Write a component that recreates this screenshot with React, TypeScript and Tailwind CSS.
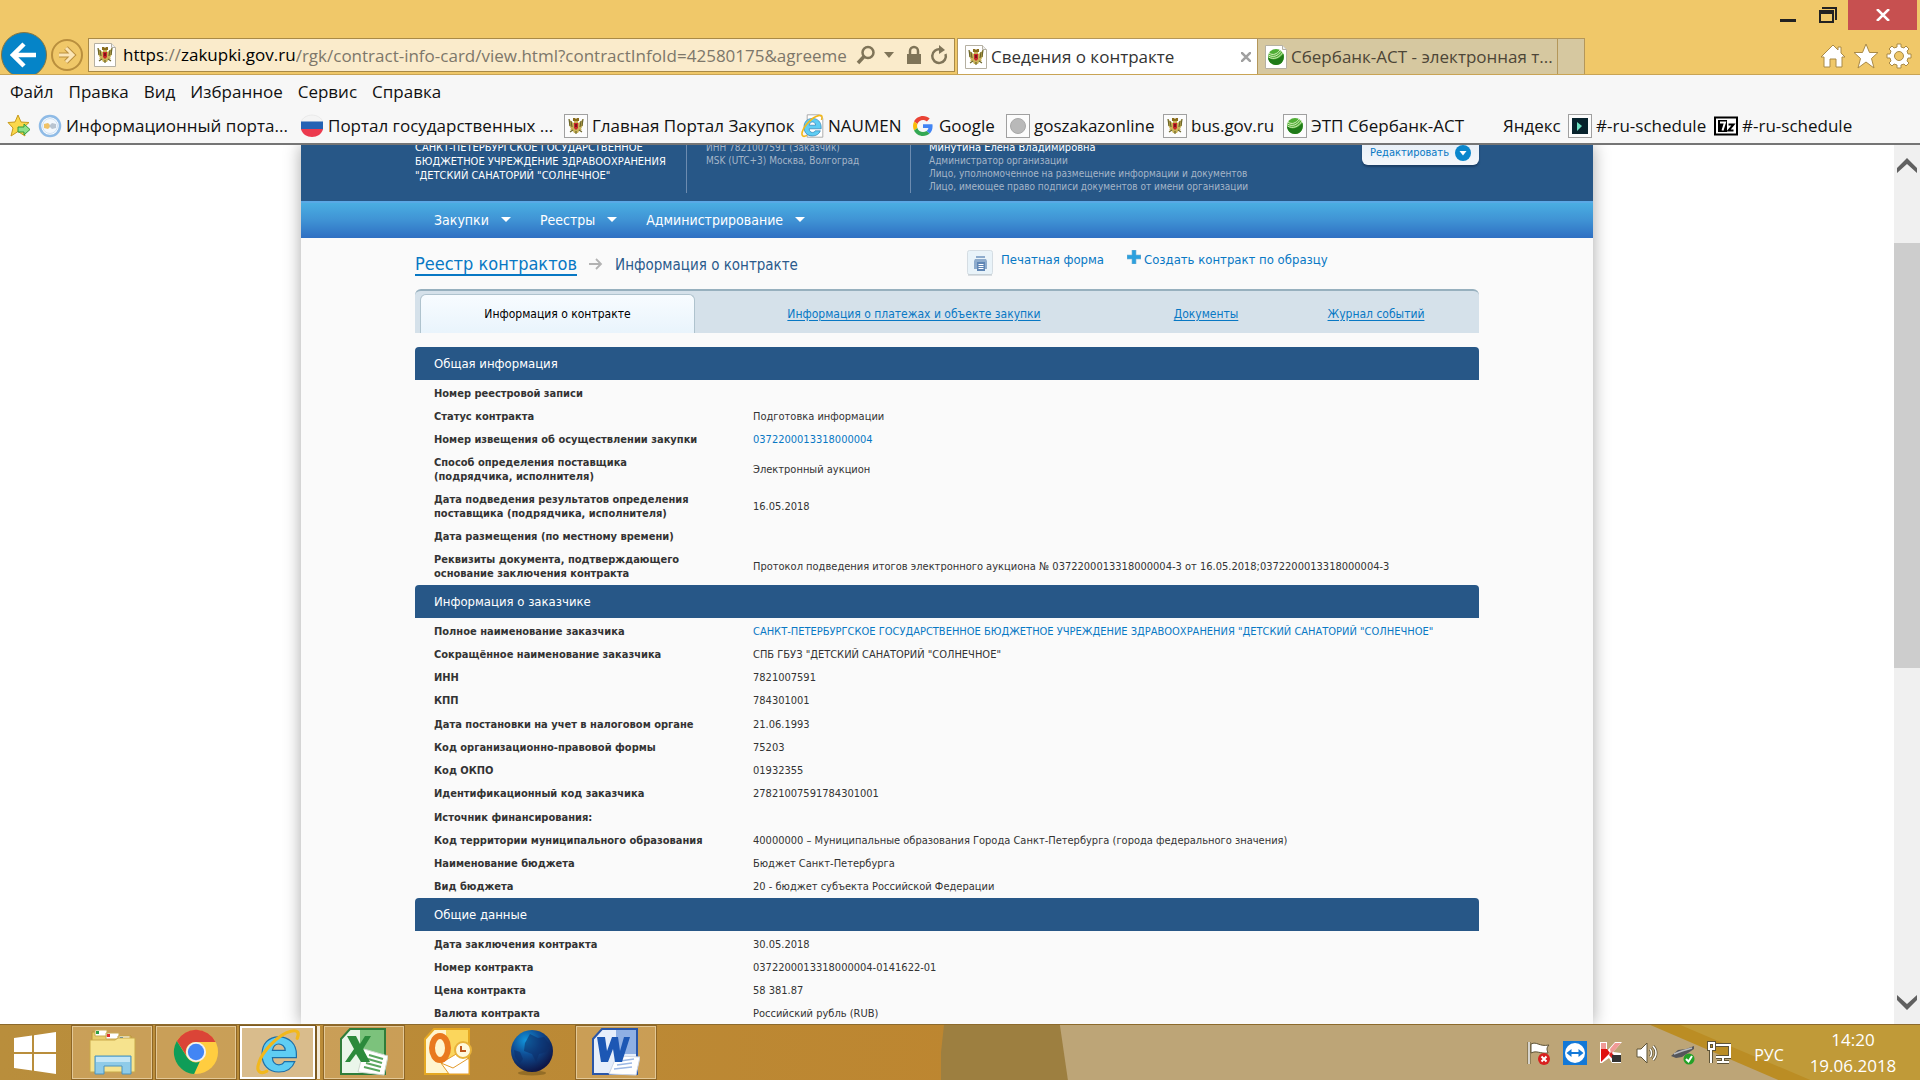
import React from 'react';

const SITE_FONT = "font-['DejaVu_Sans_Condensed','DejaVu_Sans',sans-serif]";

/* ---------- Icons ---------- */

const Eagle = () => (
    <g>
        <path d="M5 5l3 3 2 1v-3h4v3l2-1 3-3v6l-2 4 1 1-3 1-1 2h-4l-1-2-3-1 1-1-2-4z" fill="#c9b257" />
        <path d="M5 5l1 7M19 5l-1 7M7 7l1 6M17 7l-1 6M9 16l-3 2M15 16l3 2M12 17v3" stroke="#6b652a" strokeWidth="1.2" fill="none" />
        <path d="M9 4h2l1 1 1-1h2v3H9z" fill="#8a6d1c" />
        <path d="M10 9h4v5l-2 2-2-2z" fill="#c9252b" />
        <path d="M11 10h2v3h-2z" fill="#7c1519" />
    </g>
);

const Ball = () => (
    <g>
        <circle cx="12" cy="12" r="8" fill="#4fae35" />
        <path d="M4 12c4 4 11 3 15.500-3 1 5-1 11-7.500 11-4 0-8-3-8-8z" fill="#1f7a18" />
        <path d="M5 8c4 3 8 1 11-3M4.500 10c5 3 9 1 13-4M4.500 12c5 3 11 1 14.500-5" stroke="#e4f5cc" strokeWidth=".9" fill="none" />
    </g>
);

const PageIcon: React.FC<{ children: React.ReactNode }> = ({ children }) => (
    <svg viewBox="0 0 24 24" className="w-6 h-6 shrink-0">
        <path d="M1.5 .5h17l4 4v19h-21z" fill="#fff" stroke="#b5b0a2" />
        <path d="M18.500 .5v4h4" fill="#eee" stroke="#b5b0a2" />
        {children}
    </svg>
);

const BoxIcon: React.FC<{ children: React.ReactNode }> = ({ children }) => (
    <svg viewBox="0 0 24 24" className="w-6 h-6 shrink-0">
        <rect x=".5" y=".5" width="23" height="23" fill="#fcfcfc" stroke="#a0a0a0" />
        {children}
    </svg>
);

const AddFavoriteIcon = () => (
    <svg viewBox="0 0 24 24" className="w-6 h-6">
        <path d="M11 1l3 7 8 .500-6 5.500 2 8-7-4.500L4 22l2-8-5-5.500L8 8z" fill="#fbd84b" stroke="#c79a1e" />
        <path d="M11 13h6v-3l6 5.500-6 5.500v-3h-6z" fill="#8fe08a" stroke="#2f9a3a" />
    </svg>
);

const HandshakeIcon = () => (
    <svg viewBox="0 0 24 24" className="w-6 h-6 shrink-0">
        <circle cx="12" cy="12" r="10" fill="#fff" stroke="#8fbbe6" strokeWidth="2.500" />
        <circle cx="12" cy="12" r="7.500" fill="#f3f8fd" stroke="#cfe1f3" />
        <path d="M6 10l4-1 3 3-3 3-4-1z" fill="#f0c267" />
        <path d="M18 10l-4-1-3 3 3 3 4-1z" fill="#b9c4d0" />
    </svg>
);

const FlagShieldIcon = () => (
    <svg viewBox="0 0 24 24" className="w-6 h-6 shrink-0">
        <path d="M1.500 8c0-4 6-7 10.500-7s10.500 3 10.500 7z" fill="#f4f4f4" stroke="#ddd" strokeWidth=".5" />
        <path d="M1 7.500h22v8H1z" fill="#2462b4" />
        <path d="M1 15h22c-1 5-6 8-11 8S2 20 1 15z" fill="#ec3a4e" />
    </svg>
);

const IeGlyph = () => (
    <>
        <path d="M53 33c0-13-9-22-22-22S10 20 10 33s8 22 21 22c10 0 17-5 20-13H38c-1 2-3 4-7 4-5 0-8-4-8-9h30zM23 28c1-5 4-8 8-8s8 3 8 8z" fill="#5fcdf3" stroke="#1d6fa8" strokeWidth="1.500" />
        <path d="M16 54c-7 4-14 1-10-10C10 30 30 8 46 4c9-2 11 2 8 9" fill="none" stroke="#f2b81c" strokeWidth="4" strokeLinecap="round" />
    </>
);

const GoogleIcon = () => (
    <svg viewBox="0 0 48 48" className="w-5 h-5 mx-0.5 shrink-0">
        <path fill="#EA4335" d="M24 9.500c3.540 0 6.710 1.220 9.210 3.600l6.850-6.850C35.900 2.380 30.470 0 24 0 14.620 0 6.510 5.380 2.560 13.220l7.980 6.190C12.430 13.720 17.740 9.500 24 9.500z" />
        <path fill="#4285F4" d="M46.980 24.550c0-1.570-.150-3.090-.380-4.550H24v9.020h12.940c-.580 2.960-2.260 5.480-4.780 7.180l7.730 6c4.510-4.180 7.090-10.360 7.090-17.650z" />
        <path fill="#FBBC05" d="M10.530 28.590c-.480-1.450-.760-2.990-.760-4.590s.270-3.140.760-4.590l-7.980-6.190C.920 16.460 0 20.120 0 24s.920 7.540 2.560 10.780l7.970-6.190z" />
        <path fill="#34A853" d="M24 48c6.480 0 11.930-2.130 15.890-5.810l-7.730-6c-2.150 1.450-4.920 2.300-8.160 2.300-6.260 0-11.570-4.220-13.470-9.910l-7.980 6.190C6.510 42.620 14.620 48 24 48z" />
    </svg>
);

/* ---------- Browser window ---------- */

const WindowButtons = () => (
    <div className="flex items-start pr-[3px]">
        <button type="button" aria-label="Свернуть" className="w-10 h-[30px] flex items-center justify-center">
            <svg viewBox="0 0 16 16" className="w-4 h-4"><path d="M0 12h16v3H0z" fill="#222" /></svg>
        </button>
        <button type="button" aria-label="Восстановить" className="w-10 h-[30px] flex items-center justify-center">
            <svg viewBox="0 0 18 16" className="w-[18px] h-4">
                <path d="M3 0h15v13h-2V2H3z" fill="#222" />
                <path d="M0 3h15v13H0zM2 7v7h11V7z" fill="#222" fillRule="evenodd" />
            </svg>
        </button>
        <button type="button" aria-label="Закрыть" className="w-[69px] h-[30px] bg-[#c75050] flex items-center justify-center">
            <svg viewBox="0 0 14 12" className="w-3.5 h-3"><path d="M1 0l12 12M13 0L1 12" stroke="#fff" strokeWidth="2.500" /></svg>
        </button>
    </div>
);

const TitleBar = () => (
    <header className="bg-[#f0c869] border-b border-[#c9a455] h-[75px] flex flex-col overflow-hidden">
        <div className="h-[38px] shrink-0 flex justify-end">
            <WindowButtons />
        </div>
        <div className="h-9 shrink-0 flex items-start">
            <div className="flex w-[88px] shrink-0 pl-px">
                <button type="button" aria-label="Назад" className="-mt-1.5 w-[46px] h-[46px] rounded-full bg-[#0584c8] border border-[#86753f] flex items-center justify-center">
                    <svg viewBox="0 0 28 26" className="w-7 h-[26px]"><path d="M26 13H4M14 2L3 13l11 11" stroke="#fff" strokeWidth="4.500" fill="none" /></svg>
                </button>
                <button type="button" aria-label="Вперёд" className="ml-1 mt-px w-8 h-8 rounded-full border-2 border-[#b98f3e] flex items-center justify-center">
                    <svg viewBox="0 0 20 20" className="w-5 h-5"><path d="M2 10h14M9 3l7 7-7 7" stroke="#b98f3e" strokeWidth="5" fill="none" /><path d="M2 10h14M9 3l7 7-7 7" stroke="#fbe5b5" strokeWidth="3" fill="none" /></svg>
                </button>
            </div>
            <div className="flex items-center w-[867px] h-[34px] bg-[#faebcb] border border-[#a98a47] pl-1 pr-1.5 text-[17px] text-[#7d776a]">
                <PageIcon><Eagle /></PageIcon>
                <label htmlFor="address" className="ml-1.5 whitespace-nowrap">
                    <span className="text-black">https</span>://<span className="text-black">zakupki.gov.ru</span>
                </label>
                <input
                    id="address"
                    readOnly
                    value="/rgk/contract-info-card/view.html?contractInfoId=42580175&agreeme"
                    className="flex-1 min-w-0 h-full bg-transparent outline-none"
                />
                <div className="flex items-center ml-1.5 text-[#7f7458]">
                    <button type="button" aria-label="Поиск"><svg viewBox="0 0 20 20" className="w-5 h-5"><circle cx="12" cy="7.500" r="5.500" fill="none" stroke="currentColor" strokeWidth="2.500" /><path d="M8 11.500L2 18" stroke="currentColor" strokeWidth="3.500" /></svg></button>
                    <button type="button" aria-label="Список адресов" className="ml-2"><svg viewBox="0 0 10 6" className="w-2.5 h-1.5"><path d="M0 0h10L5 6z" fill="currentColor" /></svg></button>
                    <button type="button" aria-label="Безопасность" className="ml-3"><svg viewBox="0 0 16 20" className="w-4 h-5"><path d="M1 9h14v10H1z" fill="currentColor" /><path d="M4 9V6a4 4 0 0 1 8 0v3" fill="none" stroke="currentColor" strokeWidth="2.500" /></svg></button>
                    <button type="button" aria-label="Обновить" className="ml-2"><svg viewBox="0 0 18 20" className="w-[18px] h-5"><path d="M15.500 9a6.800 6.800 0 1 1-5-4.500" fill="none" stroke="currentColor" strokeWidth="2.500" /><path d="M9 0l6 5-6 4z" fill="currentColor" /></svg></button>
                </div>
            </div>
            <div role="tablist" className="flex h-full ml-0.5 border-t border-[#b4975a]">
                <div role="tab" aria-selected="true" className="w-[300px] bg-white border-l border-[#b4975a] flex items-center pl-1.5 pr-1.5 text-[17px] text-[#333]">
                    <PageIcon><Eagle /></PageIcon>
                    <span className="ml-[3px] flex-1 whitespace-nowrap">Сведения о контракте</span>
                    <button type="button" aria-label="Закрыть вкладку"><svg viewBox="0 0 10 10" className="w-2.5 h-2.5"><path d="M0 0l10 10M10 0L0 10" stroke="#a0a0a0" strokeWidth="2.500" /></svg></button>
                </div>
                <div role="tab" aria-selected="false" className="w-[301px] bg-[#d6c8a0] border-x border-[#b4975a] flex items-center pl-1.5 text-[17px] text-[#4d4637]">
                    <PageIcon><Ball /></PageIcon>
                    <span className="ml-[3px] whitespace-nowrap">Сбербанк-АСТ - электронная т...</span>
                </div>
                <button type="button" aria-label="Новая вкладка" className="w-[27px] bg-[#d6c8a0] border-r border-[#b4975a]" />
            </div>
            <div className="flex ml-auto pr-2 pt-[5px] gap-[7px] text-white">
                <button type="button" aria-label="Домой"><svg viewBox="0 0 26 26" className="w-[26px] h-[26px]"><path d="M13 2L1 14h3v10h6v-8h6v8h6V14h3l-4-4V4h-3v3z" fill="currentColor" stroke="#a98a47" /></svg></button>
                <button type="button" aria-label="Избранное"><svg viewBox="0 0 26 26" className="w-[26px] h-[26px]"><path d="M13 1l3.500 8.500H25l-6.500 6L21 25l-8-6-8 6 2.500-9.500-6.500-6h8.500z" fill="currentColor" stroke="#a98a47" /></svg></button>
                <button type="button" aria-label="Сервис"><svg viewBox="0 0 26 26" className="w-[26px] h-[26px]"><path d="M11 1h4v3l3 1 2-2 3 3-2 2 1 3h3v4h-3l-1 3 2 2-3 3-2-2-3 1v3h-4v-3l-3-1-2 2-3-3 2-2-1-3H1v-4h3l1-3-2-2 3-3 2 2 3-1zM13 8.500a4.500 4.500 0 1 0 0 9 4.500 4.500 0 0 0 0-9z" fill="currentColor" fillRule="evenodd" stroke="#a98a47" /></svg></button>
            </div>
        </div>
    </header>
);

const menuItems = ['Файл', 'Правка', 'Вид', 'Избранное', 'Сервис', 'Справка'];

const favorites = [
    { text: 'Информационный порта...', width: 'w-[262px]', icon: <HandshakeIcon /> },
    { text: 'Портал государственных ...', width: 'w-[264px]', icon: <FlagShieldIcon /> },
    { text: 'Главная Портал Закупок', width: 'w-[236px]', icon: <BoxIcon><Eagle /></BoxIcon> },
    {
        text: 'NAUMEN',
        width: 'w-[111px]',
        icon: (
            <svg viewBox="0 0 60 60" className="w-6 h-6 shrink-0">
                <path d="M18 2h30l9 9v47H18z" fill="#fff" stroke="#999" strokeWidth="2" />
                <IeGlyph />
            </svg>
        ),
    },
    { text: 'Google', width: 'w-[95px]', icon: <GoogleIcon /> },
    { text: 'goszakazonline', width: 'w-[157px]', icon: <BoxIcon><circle cx="12" cy="12" r="7.500" fill="#b9b9b9" stroke="#a8a8a8" /></BoxIcon> },
    { text: 'bus.gov.ru', width: 'w-[120px]', icon: <BoxIcon><Eagle /></BoxIcon> },
    { text: 'ЭТП Сбербанк-АСТ', width: 'w-[192px]', icon: <BoxIcon><Ball /></BoxIcon> },
    { text: 'Яндекс', width: 'w-[93px]', icon: <span className="w-6 shrink-0" /> },
    { text: '#-ru-schedule', width: 'w-[146px]', icon: <BoxIcon><path d="M4 4h16v16H4z" fill="#07222c" /><path d="M9 8l5 4-5 5z" fill="#6be0c0" /></BoxIcon> },
    {
        text: '#-ru-schedule',
        width: 'w-[142px]',
        icon: (
            <svg viewBox="0 0 24 24" className="w-6 h-6 shrink-0">
                <path d="M1 3.500h22v17H1z" fill="#fff" stroke="#000" strokeWidth="2" />
                <path d="M4 6h9v12H4z" fill="#000" />
                <path d="M6 8.500h5l-2.500 8" stroke="#fff" strokeWidth="2" fill="none" />
                <path d="M14.500 10.500h5l-5 6h5" stroke="#000" strokeWidth="2" fill="none" />
            </svg>
        ),
    },
];

const Toolbars = () => (
    <div className="bg-[#f7f7f7] border-b-2 border-[#757575] h-[70px] text-[17px] text-[#111] overflow-hidden">
        <nav className="flex h-[34px] items-center gap-[15px] pl-2.5">
            {menuItems.map((item) => (
                <button key={item} type="button">{item}</button>
            ))}
        </nav>
        <nav className="flex h-[34px] items-center pl-[7px]">
            <button type="button" aria-label="Добавить в избранное" className="w-[31px]"><AddFavoriteIcon /></button>
            {favorites.map((fav, i) => (
                <a key={i} href="#" className={`flex items-center gap-1 shrink-0 whitespace-nowrap ${fav.width}`}>
                    {fav.icon}
                    {fav.text}
                </a>
            ))}
        </nav>
    </div>
);

/* ---------- Site ---------- */

const Caret = () => (
    <svg viewBox="0 0 10 5" className="w-2.5 h-[5px]"><path d="M0 0h10L5 5z" fill="#fff" /></svg>
);

const SiteHeader = () => (
    <div className="bg-[#275787] h-14 shrink-0 flex justify-center">
        <div className="w-[1064px] flex items-end text-[11px] text-[#a5b5c8] whitespace-nowrap">
            <div className="w-[271px] pb-[18px] text-white leading-[14px]">
                САНКТ-ПЕТЕРБУРГСКОЕ ГОСУДАРСТВЕННОЕ<br />
                БЮДЖЕТНОЕ УЧРЕЖДЕНИЕ ЗДРАВООХРАНЕНИЯ<br />
                "ДЕТСКИЙ САНАТОРИЙ "СОЛНЕЧНОЕ"
            </div>
            <div className="w-[224px] h-[60px] mb-2 pl-[19px] pt-2 border-l border-[#6d8cb0] leading-[13px] text-[10px]">
                ИНН 7821007591 (Заказчик)<br />
                MSK (UTC+3) Москва, Волгоград
            </div>
            <div className="h-[60px] mb-2 pl-[18px] pt-2 border-l border-[#6d8cb0] leading-[13px] text-[10px]">
                <div className="text-[11px] text-white">Минутина Елена Владимировна</div>
                Администратор организации<br />
                Лицо, уполномоченное на размещение информации и документов<br />
                Лицо, имеющее право подписи документов от имени организации
            </div>
            <button type="button" className="ml-auto mb-9 w-[117px] h-7 rounded-b-md bg-linear-to-b from-[#e4edf6] to-[#f4f7fb] shadow-[0_2px_2px_#1b3f66] px-2 pb-1 flex items-end justify-between leading-4 text-[#0878c4]">
                Редактировать
                <svg viewBox="0 0 16 16" className="w-4 h-4"><circle cx="8" cy="8" r="8" fill="#0a86cc" /><path d="M4.500 6h7L8 10.500z" fill="#fff" /></svg>
            </button>
        </div>
    </div>
);

const SiteNav = () => (
    <nav className="h-[37px] shrink-0 flex justify-center border-t-2 border-[#5aa9e6] bg-linear-to-b from-[#4aaee2] via-[#3f92d4] to-[#2f6fc2]">
        <div className="w-[1064px] pl-[19px] pb-0.5 flex items-center gap-[29px] text-sm text-white">
            {['Закупки', 'Реестры', 'Администрирование'].map((item) => (
                <button key={item} type="button" className="flex items-center gap-3">
                    {item}
                    <Caret />
                </button>
            ))}
        </div>
    </nav>
);

const Breadcrumbs = () => (
    <div className="flex h-[51px] shrink-0 items-start text-[13px] leading-4 text-[#0878c4] whitespace-nowrap">
        <div className="flex items-baseline w-[552px] pt-4">
            <a href="#" className="text-lg leading-5 border-b-2 border-[#0878c4]">Реестр контрактов</a>
            <svg viewBox="0 0 14 12" className="w-3.5 h-3 mx-3"><path d="M0 6h12M7 1l5 5-5 5" stroke="#b3b3b3" strokeWidth="1.800" fill="none" /></svg>
            <span className="text-[15px] text-[#2b5a8c]">Информация о контракте</span>
        </div>
        <a href="#" className="flex items-start pt-3 w-[160px]">
            <svg viewBox="0 0 26 26" className="w-[26px] h-[26px] shrink-0">
                <rect x=".5" y=".5" width="25" height="24" rx="2" fill="#e9f3f9" stroke="#d5dde3" />
                <path d="M1 25h24" stroke="#b9c2c9" />
                <path d="M9 6h9v2H9zM8 9h11l1 2v8h-3v-6h-7v6H7v-8z" fill="#8eaccd" />
                <path d="M10 12h8v9h-8z" fill="#5f86b5" />
                <path d="M11.500 14.500h5M11.500 16.500h5M11.500 18.500h5" stroke="#fff" />
            </svg>
            <span className="ml-2 pt-0.5">Печатная форма</span>
        </a>
        <a href="#" className="flex items-start pt-3">
            <svg viewBox="0 0 14 14" className="w-3.5 h-3.5 shrink-0"><path d="M5 0h4v5h5v4H9v5H5V9H0V5h5z" fill="#2ba0de" stroke="#7fb2d2" strokeWidth=".6" /></svg>
            <span className="ml-[3px] pt-0.5">Создать контракт по образцу</span>
        </a>
    </div>
);

const TabBar = () => (
    <div role="tablist" className="flex h-11 shrink-0 pl-[5px] pt-[3px] rounded-t-md bg-[#d5e1ea] border-t-2 border-[#97b0be] text-xs text-[#0878c4]">
        <button type="button" role="tab" aria-selected="true" className="w-[275px] rounded-t-md border border-b-0 border-[#afc3ce] bg-linear-to-b from-[#f8fcff] to-[#e9f4fc] text-black">
            Информация о контракте
        </button>
        <a href="#" role="tab" className="w-[438px] flex items-center justify-center underline underline-offset-2">Информация о платежах и объекте закупки</a>
        <a href="#" role="tab" className="w-[146px] flex items-center justify-center underline underline-offset-2">Документы</a>
        <a href="#" role="tab" className="w-[194px] flex items-center justify-center underline underline-offset-2">Журнал событий</a>
    </div>
);

interface InfoRow {
    label: string;
    value?: string;
    link?: boolean;
}

interface InfoSectionProps {
    title: string;
    rows: InfoRow[];
}

const sections: InfoSectionProps[] = [
    {
        title: 'Общая информация',
        rows: [
            { label: 'Номер реестровой записи' },
            { label: 'Статус контракта', value: 'Подготовка информации' },
            { label: 'Номер извещения об осуществлении закупки', value: '0372200013318000004', link: true },
            { label: 'Способ определения поставщика\n(подрядчика, исполнителя)', value: 'Электронный аукцион' },
            { label: 'Дата подведения результатов определения\nпоставщика (подрядчика, исполнителя)', value: '16.05.2018' },
            { label: 'Дата размещения (по местному времени)' },
            {
                label: 'Реквизиты документа, подтверждающего\nоснование заключения контракта',
                value: 'Протокол подведения итогов электронного аукциона № 0372200013318000004-3 от 16.05.2018;0372200013318000004-3',
            },
        ],
    },
    {
        title: 'Информация о заказчике',
        rows: [
            {
                label: 'Полное наименование заказчика',
                value: 'САНКТ-ПЕТЕРБУРГСКОЕ ГОСУДАРСТВЕННОЕ БЮДЖЕТНОЕ УЧРЕЖДЕНИЕ ЗДРАВООХРАНЕНИЯ "ДЕТСКИЙ САНАТОРИЙ "СОЛНЕЧНОЕ"',
                link: true,
            },
            { label: 'Сокращённое наименование заказчика', value: 'СПБ ГБУЗ "ДЕТСКИЙ САНАТОРИЙ "СОЛНЕЧНОЕ"' },
            { label: 'ИНН', value: '7821007591' },
            { label: 'КПП', value: '784301001' },
            { label: 'Дата постановки на учет в налоговом органе', value: '21.06.1993' },
            { label: 'Код организационно-правовой формы', value: '75203' },
            { label: 'Код ОКПО', value: '01932355' },
            { label: 'Идентификационный код заказчика', value: '27821007591784301001' },
            { label: 'Источник финансирования:' },
            { label: 'Код территории муниципального образования', value: '40000000 – Муниципальные образования Города Санкт-Петербурга (города федерального значения)' },
            { label: 'Наименование бюджета', value: 'Бюджет Санкт-Петербурга' },
            { label: 'Вид бюджета', value: '20 - бюджет субъекта Российской Федерации' },
        ],
    },
    {
        title: 'Общие данные',
        rows: [
            { label: 'Дата заключения контракта', value: '30.05.2018' },
            { label: 'Номер контракта', value: '0372200013318000004-0141622-01' },
            { label: 'Цена контракта', value: '58 381.87' },
            { label: 'Валюта контракта', value: 'Российский рубль (RUB)' },
        ],
    },
];

const InfoSection: React.FC<InfoSectionProps> = ({ title, rows }) => (
    <section className="shrink-0 pb-px">
        <h2 className="h-[33px] flex items-center pl-[19px] rounded-t-[4px] bg-[#275787] text-[13px] text-white">{title}</h2>
        <table className="w-full text-[11px] leading-[14px] text-[#333]">
            <tbody>
                {rows.map((row) => (
                    <tr key={row.label} className="nth-[4n+1]:h-6">
                        <th scope="row" className="w-[338px] pl-[19px] pt-1.5 pb-[3px] text-left font-bold whitespace-pre-line">{row.label}</th>
                        <td className="pt-1.5 pb-[3px] whitespace-nowrap">
                            {row.link ? <a href="#" className="text-[#0878c4]">{row.value}</a> : row.value}
                        </td>
                    </tr>
                ))}
            </tbody>
        </table>
    </section>
);

const Scrollbar = () => (
    <div className="w-[26px] shrink-0 bg-[#f0f0f0] flex flex-col items-center">
        <button type="button" aria-label="Вверх" className="h-10 shrink-0 flex items-center">
            <svg viewBox="0 0 20 15" className="w-5 h-[15px]"><path d="M0 10L10 0l10 10v5L10 6 0 15z" fill="#606060" /></svg>
        </button>
        <div className="flex-1 w-full flex flex-col">
            <div className="h-[58px]" />
            <div className="h-[425px] bg-[#cdcdcd]" />
        </div>
        <button type="button" aria-label="Вниз" className="h-11 shrink-0 flex items-center">
            <svg viewBox="0 0 20 15" className="w-5 h-[15px]"><path d="M0 5l10 10L20 5V0L10 9 0 0z" fill="#606060" /></svg>
        </button>
    </div>
);

/* ---------- Taskbar ---------- */

const ExplorerIcon = () => (
    <svg viewBox="0 0 48 48" className="w-12 h-12">
        <path d="M4 4h14l3 4h22v34H4z" fill="#e8cc6a" stroke="#b8943a" />
        <path d="M7 2h12v6H7zM18 5h13v6H18zM30 8h12v5H30z" fill="#fff" stroke="#c9ab55" />
        <path d="M8 3h3v3H8z" fill="#2f9e44" /><path d="M19 6h3v3h-3z" fill="#e03131" /><path d="M32 9h3v3h-3z" fill="#1c7ed6" />
        <path d="M2 12h25l3-2h17v34H2z" fill="#f6e38e" stroke="#c9a94a" />
        <path d="M7 46V28h36v18h-9v-8H16v8z" fill="#8fcbe8" stroke="#4b93bd" />
        <path d="M8 29h34v5H8z" fill="#c4e6f5" />
    </svg>
);

const ChromeIcon = () => (
    <svg viewBox="0 0 48 48" className="w-[46px] h-[46px]">
        <circle cx="24" cy="24" r="23" fill="#ffcd40" />
        <path d="M4 12.500A23 23 0 0 1 44.500 13.500H24A10.500 10.500 0 0 0 14 28z" fill="#db4437" />
        <path d="M4 12.500L15 30a10.500 10.500 0 0 0 13 4l-6 13A23 23 0 0 1 4 12.500z" fill="#0f9d58" />
        <circle cx="24" cy="24" r="10.500" fill="#f1f1f1" />
        <circle cx="24" cy="24" r="8.500" fill="#4285f4" />
    </svg>
);

const ExcelIcon = () => (
    <svg viewBox="0 0 48 48" className="w-12 h-12">
        <path d="M10 1h35v45H1V11z" fill="#eaf6ea" stroke="#2f7d3a" strokeWidth="2" />
        <path d="M20 2h24v24H20z" fill="#7cc27c" />
        <path d="M24 21l24 7-4 19-26-3z" fill="#fff" stroke="#cdd8cd" />
        <path d="M29 27l14 4M28 31l14 4M26 35l15 4M24 39l16 4" stroke="#5aa65f" strokeWidth="2" />
        <path d="M7 8h9l4 8 5-8h6l-8 13 7 13h-9l-5-8-6 8H5l9-13z" fill="#2c8a3c" />
    </svg>
);

const OutlookIcon = () => (
    <svg viewBox="0 0 48 48" className="w-12 h-12">
        <path d="M10 1h35v45H1V11z" fill="#fff5cf" stroke="#e5a823" strokeWidth="2" />
        <path d="M22 2h22v30H22z" fill="#fbd65c" />
        <path d="M17 35l17-10 11 6v15H25z" fill="#fff" stroke="#e39a2b" />
        <path d="M17 35l12 5 16-10" stroke="#e39a2b" fill="none" />
        <ellipse cx="16" cy="20" rx="8" ry="12" fill="none" stroke="#e9791f" strokeWidth="6" />
        <circle cx="39" cy="22" r="8" fill="#fff8dc" stroke="#e8b23a" strokeWidth="2" />
        <path d="M37 18v5h5" stroke="#c0561b" strokeWidth="2" fill="none" />
    </svg>
);

const GlobeIcon = () => (
    <svg viewBox="0 0 48 48" className="w-12 h-12">
        <defs>
            <radialGradient id="globe" cx="35%" cy="25%" r="75%">
                <stop offset="0" stopColor="#1296dc" />
                <stop offset=".45" stopColor="#0f4f96" />
                <stop offset="1" stopColor="#0e1748" />
            </radialGradient>
        </defs>
        <ellipse cx="24" cy="45" rx="14" ry="2.500" fill="#7a5a1c" opacity=".6" />
        <circle cx="24" cy="23" r="21" fill="url(#globe)" />
        <path d="M22 6l8 4 6-1 6 8-4 7-7 2-3 8-4-8-8-3 1-8z" fill="#0c2c66" opacity=".55" />
        <path d="M6 22l6 2 3 7-3 4-5-6z" fill="#0c2c66" opacity=".55" />
    </svg>
);

const WordIcon = () => (
    <svg viewBox="0 0 48 48" className="w-12 h-12">
        <path d="M10 1h35v45H1V11z" fill="#e6eefb" stroke="#2a56a8" strokeWidth="2" />
        <path d="M24 2h20v24H24z" fill="#8fb0e4" />
        <path d="M22 34l4-6 22 1-4 18-27-1z" fill="#fff" stroke="#cdd6e6" />
        <path d="M28 33l14-2M25 37l15-2M22 41l18-2" stroke="#9db8e4" strokeWidth="1.500" />
        <path d="M5 9h8l2 14 5-14h6l2 14 4-14h6l-8 25h-7l-2-13-5 13H9z" fill="#1c57b4" />
    </svg>
);

const IeIcon = () => (
    <svg viewBox="0 0 60 60" className="w-12 h-12"><IeGlyph /></svg>
);

const framed = 'w-20 border border-[#e3c896] bg-[#d3ab6c]/60 outline outline-[#8e6626]';
const apps = [
    { name: 'Проводник', icon: <ExplorerIcon />, style: framed },
    { name: 'Google Chrome', icon: <ChromeIcon />, style: framed },
    { name: 'Internet Explorer', icon: <IeIcon />, style: 'w-[75px] mr-[5px] border-2 border-white bg-[#d9bc8c] outline outline-[#7d5a20] shadow-[2px_0_0_#7d5a20,5px_0_0_#f3e8d2]' },
    { name: 'Excel', icon: <ExcelIcon />, style: framed },
    { name: 'Outlook', icon: <OutlookIcon />, style: 'w-20' },
    { name: 'Firefox', icon: <GlobeIcon />, style: 'w-20' },
    { name: 'Word', icon: <WordIcon />, style: framed },
];

const Tray = () => (
    <div className="flex items-center gap-3 pt-px pr-0.5">
        <svg viewBox="0 0 24 24" className="w-6 h-6">
            <path d="M2 1v22" stroke="#5e5438" strokeWidth="3" /><path d="M2 1v22" stroke="#fff" strokeWidth="1.500" />
            <path d="M4 3c6-3 8 3 18 1-3 3-2 5-1 8-8 1-11-3-17 0z" fill="#fff" stroke="#5e5438" />
            <circle cx="17" cy="18" r="6" fill="#d8201f" /><path d="M14.500 15.500l5 5M19.500 15.500l-5 5" stroke="#fff" strokeWidth="2" />
        </svg>
        <svg viewBox="0 0 24 24" className="w-6 h-6">
            <path d="M0 0h24v24H0z" fill="#1278d8" /><circle cx="12" cy="12" r="10" fill="#fff" />
            <path d="M3.500 12l5-4v3h7V8l5 4-5 4v-3h-7v3z" fill="#1278d8" />
        </svg>
        <svg viewBox="0 0 24 24" className="w-6 h-6">
            <path d="M1 1h7v9l8-9h7l-9 10 8 1v10h-9l-3-5-7 5H1z" fill="#fff" />
            <path d="M2 8h6l3 4-9 9z" fill="#e0110f" /><path d="M2 2h5v6H2zM11 8l5-6h6l-7 8-3 3z" fill="#f09a96" />
            <path d="M12 11l9 10h-5l-6-7z" fill="#d32220" />
            <path d="M13 14h9v7h-9z" fill="#333" />
        </svg>
        <svg viewBox="0 0 24 24" className="w-6 h-6">
            <path d="M2 8h4l6-6v20l-6-6H2z" fill="#fff" stroke="#5e5438" />
            <path d="M15 8c2 2 2 6 0 8M18 5c4 4 4 10 0 14" fill="none" stroke="#5e5438" strokeWidth="3" />
            <path d="M15 8c2 2 2 6 0 8M18 5c4 4 4 10 0 14" fill="none" stroke="#fff" strokeWidth="1.500" />
        </svg>
        <svg viewBox="0 0 24 24" className="w-6 h-6">
            <path d="M0 15l7-6 8-1 8-3v3l-6 4-6 4-6 1z" fill="#55565a" /><path d="M3 13l8-3 10-3" stroke="#b9bbc0" strokeWidth="1.500" fill="none" />
            <circle cx="18" cy="18" r="5.500" fill="#23a127" /><path d="M15 18l2.500 2.500L21 15" stroke="#fff" strokeWidth="2" fill="none" />
        </svg>
        <svg viewBox="0 0 24 24" className="w-6 h-6">
            <path d="M9 4h14v12H9M16 16v4M10 21h12M4 8v14M2 2h5v6H2z" fill="none" stroke="#5e5438" strokeWidth="4" />
            <path d="M9 4h14v12H9M16 16v4M10 21h12M4 8v14M2 2h5v6H2z" fill="none" stroke="#fff" strokeWidth="2" />
        </svg>
    </div>
);

const Taskbar = () => (
    <footer className="h-14 shrink-0 relative flex bg-linear-to-r from-[#b98e3c] via-[#bd8630] to-[#b4722a] to-49% border-t border-[#8c6a2c] text-white">
        <svg viewBox="0 0 980 56" preserveAspectRatio="none" className="absolute right-0 top-0 w-[51%] h-full" aria-hidden="true">
            <path d="M3 0H980V56H-3z" fill="#9d7f40" />
            <path d="M119 0H980V56H127z" fill="#bda577" />
            <path d="M715 0H980V56H845z" fill="#c09a38" />
            <path d="M710 0h30l130 56h-32z" fill="#bb8d24" />
        </svg>
        <button type="button" aria-label="Пуск" className="w-[72px] pl-3.5 flex items-center">
            <svg viewBox="0 0 42 42" className="w-[42px] h-[42px]">
                <path d="M0 6l18-2.500V20H0zM20 3.200L42 0v20H20zM0 22h18v16.500L0 36zM20 22h22v20l-22-3.200z" fill="#fff" />
            </svg>
        </button>
        <div className="flex gap-1 pt-px pb-px">
            {apps.map((app) => (
                <button key={app.name} type="button" aria-label={app.name} className={`flex items-center justify-center pb-0.5 ${app.style}`}>
                    {app.icon}
                </button>
            ))}
        </div>
        <div className="relative ml-auto flex items-center">
            <Tray />
            <span className="w-[72px] text-center text-base pt-1">РУС</span>
            <time className="w-24 mr-[19px] text-center text-[17px] leading-[26px]">
                14:20<br />19.06.2018
            </time>
        </div>
    </footer>
);

export default function App() {
    return (
        <div className="h-screen flex flex-col overflow-hidden bg-white font-['Open_Sans','Noto_Sans',sans-serif]">
            <TitleBar />
            <Toolbars />
            <div className="flex-1 min-h-0 flex">
                <div className="flex-1 min-w-0 overflow-hidden flex justify-center">
                    <div className={`w-[1292px] bg-[#fafafa] shadow-[0_0_16px_rgba(0,0,0,0.35)] flex flex-col overflow-hidden ${SITE_FONT}`}>
                        <SiteHeader />
                        <SiteNav />
                        <main className="w-[1064px] mx-auto flex flex-col">
                            <Breadcrumbs />
                            <TabBar />
                            <div className="pt-3.5">
                                {sections.map((section) => (
                                    <InfoSection key={section.title} {...section} />
                                ))}
                            </div>
                        </main>
                    </div>
                </div>
                <Scrollbar />
            </div>
            <Taskbar />
        </div>
    );
}
